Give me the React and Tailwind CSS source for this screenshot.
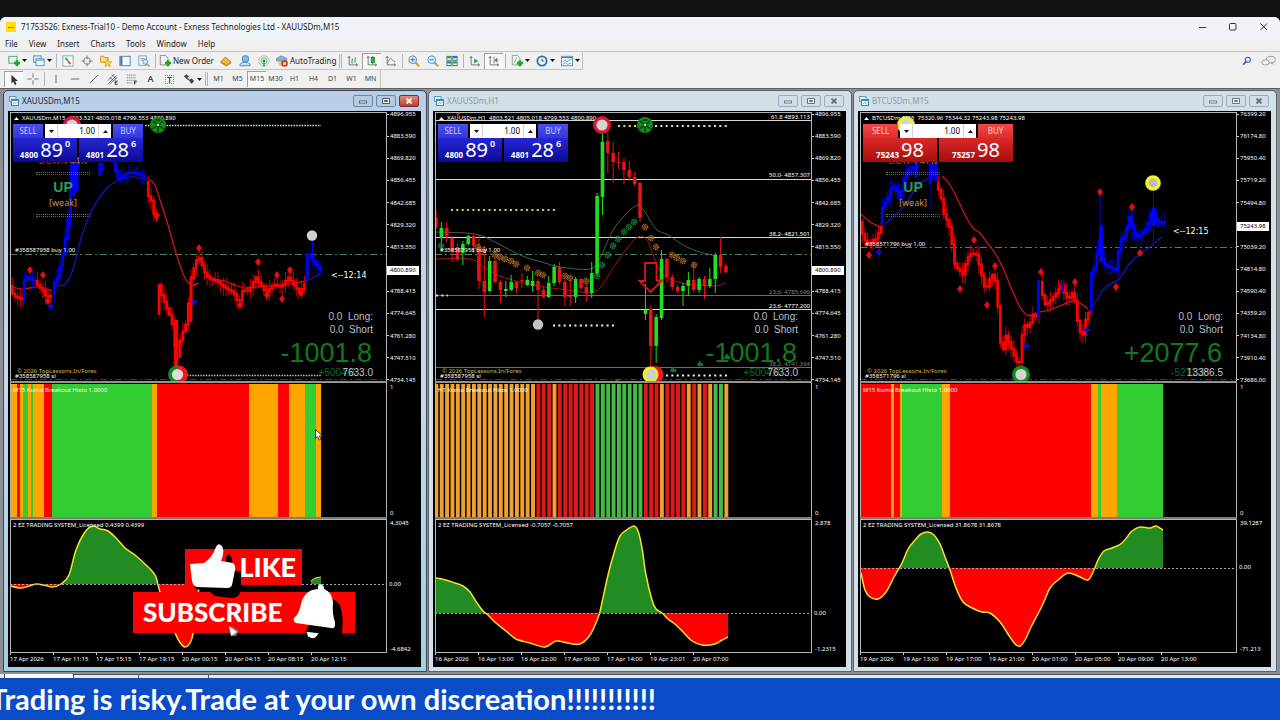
import React from "react";

/* ---------- chart helpers ---------- */

const at = (pts, x) => {
  for (let i = 1; i < pts.length; i++) {
    const [x0, y0] = pts[i - 1];
    const [x1, y1] = pts[i];
    if (x <= x1) return x1 === x0 ? y1 : y0 + ((y1 - y0) * (x - x0)) / (x1 - x0);
  }
  return pts[pts.length - 1][1];
};

const smooth = (pts) => {
  let d = `M${pts[0][0]} ${pts[0][1]}`;
  for (let i = 0; i < pts.length - 1; i++) {
    const a = pts[i - 1] || pts[i];
    const b = pts[i];
    const c = pts[i + 1];
    const e = pts[i + 2] || c;
    d += `C${b[0] + (c[0] - a[0]) / 6} ${b[1] + (c[1] - a[1]) / 6} ${c[0] - (e[0] - b[0]) / 6} ${c[1] - (e[1] - b[1]) / 6} ${c[0]} ${c[1]}`;
  }
  return d;
};

function Ribbon({ pts, color }) {
  const step = 2.7;
  let body = "";
  let wick = "";
  let i = 0;
  for (let x = pts[0][0]; x < pts[pts.length - 1][0]; x += step, i++) {
    const a = at(pts, x);
    const b = at(pts, x + step);
    const lo = Math.min(a, b) - 1;
    const hi = Math.max(a, b) + 1;
    const k = Math.abs(Math.sin(i * 5.3 + pts[0][0]));
    const m = Math.abs(Math.cos(i * 3.7 + pts[0][0]));
    body += `M${x + 1.3} ${lo}V${hi}`;
    wick += `M${x + 1.3} ${lo - 1 - k * 7}V${hi + 1 + m * 7}`;
  }
  return (
    <g stroke={color}>
      <path d={body} strokeWidth="2.8" />
      <path d={wick} strokeWidth="0.8" />
    </g>
  );
}

const Curve = ({ pts, color, w = 1.2 }) => <path d={smooth(pts)} fill="none" stroke={color} strokeWidth={w} />;

const Diamonds = ({ pts }) => (
  <g fill="#e80c0c">
    {pts.map(([x, y]) => (
      <path key={x + "-" + y} d={`M${x} ${y - 4}L${x + 3} ${y}L${x} ${y + 4}L${x - 3} ${y}Z`} />
    ))}
  </g>
);

const Pluses = ({ pts }) => (
  <g stroke="#0a0ae0" strokeWidth="2.2">
    {pts.map(([x, y]) => (
      <path key={x} d={`M${x - 3} ${y}H${x + 3}M${x} ${y - 3}V${y + 3}`} />
    ))}
  </g>
);

const Dots = ({ x1, x2, y, color, gap = 5.36, w = 2 }) => (
  <path d={`M${x1} ${y}H${x2}`} stroke={color} strokeWidth={w} strokeDasharray={`${w} ${gap - w}`} />
);

const Orb = ({ x, y, ring, core = "#d4d4d4", r = 9 }) => (
  <g>
    <circle cx={x} cy={y} r={r} fill={ring} />
    <circle cx={x} cy={y} r={r - 3.4} fill={core} />
  </g>
);

const Emblem = ({ x, y }) => (
  <g>
    <circle cx={x} cy={y} r="8" fill="#128a1c" />
    <path
      d={`M${x - 6} ${y + 4}L${x} ${y}L${x + 6} ${y + 4}M${x - 5} ${y - 4}L${x} ${y}L${x + 5} ${y - 4}M${x} ${y}V${y + 7}M${x - 2.4} ${y - 5}H${x + 2.4}`}
      stroke="#03400a"
      strokeWidth="1.4"
      fill="none"
    />
    <circle cx={x} cy={y} r="1.3" fill="#9be89b" />
  </g>
);

const Gears = ({ pts, color }) => (
  <g fill={color} stroke={color}>
    {pts.map(([x, y]) => (
      <g key={x + "-" + y}>
        <circle cx={x} cy={y} r="2.6" strokeWidth="1.6" strokeDasharray="1.2 0.84" fill="none" />
        <circle cx={x} cy={y} r="2" fillOpacity="0.6" stroke="none" />
      </g>
    ))}
  </g>
);

const OrderLines = ({ x, buy }) => (
  <g>
    <path d={`M${x} ${buy}H${x + 377}`} stroke="#4c8456" strokeWidth="1" strokeDasharray="7 3 2 3" />
    <path d={`M${x} 379.5H${x + 377}`} stroke="#a01030" strokeWidth="1" strokeDasharray="7 3 2 3" />
  </g>
);

/* ---------- price charts ---------- */

function GoldM15() {
  return (
    <>
      <OrderLines x={10} buy={254.5} />
      <Dots x1={145} x2={321} y={125.5} color="#b7e6c4" gap={2.7} w={1.6} />
      <Dots x1={187} x2={321} y={375.5} color="#d8cf86" gap={2.7} w={1.4} />
      <Curve color="#d01818" pts={[[11, 286], [22, 289], [36, 287], [44, 288], [52, 291]]} />
      <Curve color="#1414c8" pts={[[56, 286], [65, 284], [72, 272], [77, 255], [82, 235], [92, 210], [105, 190], [115, 182], [125, 178], [135, 177], [147, 180]]} />
      <Curve color="#e01414" pts={[[150, 180], [155, 185], [160, 200], [168, 225], [175, 250], [180, 265], [185, 278], [191, 285], [199, 283]]} />
      <Curve color="#e01414" pts={[[207, 274], [215, 279], [225, 281], [235, 285], [244, 288], [255, 287], [270, 286], [290, 284], [305, 281]]} />
      <Curve color="#1414c8" pts={[[306, 281], [313, 278], [320, 274]]} />
      <Ribbon color="#ff0000" pts={[[11, 286], [13, 293], [17, 297], [22, 299]]} />
      <Ribbon color="#0000ff" pts={[[23, 298], [25, 281], [28, 277], [35, 281]]} />
      <Ribbon color="#ff0000" pts={[[36, 281], [40, 287], [44, 290], [48, 298], [52, 296]]} />
      <Ribbon color="#0000ff" pts={[[53, 294], [56, 281], [59, 277], [62, 262], [65, 250], [67, 235], [70, 212], [72, 188], [74, 170], [80, 163]]} />
      <path d="M71 163V188M74 163V196M77 163V192M100 163V176M102 163V172" stroke="#0000ff" strokeWidth="3" />
      <Ribbon color="#0000ff" pts={[[114, 162], [117, 172], [120, 180], [126, 174], [132, 172], [140, 174], [146, 177]]} />
      <Ribbon color="#ff0000" pts={[[147, 182], [148, 195], [152, 198], [154, 212], [157, 216]]} />
      <path d="M153 214H160L156.500 222Z" fill="#ff0000" />
      <path d="M159 284V315" stroke="#ff0000" strokeWidth="2.8" />
      <Ribbon color="#ff0000" pts={[[160, 285], [163, 296], [168, 308], [173, 320], [176, 346], [180, 346], [184, 332], [188, 322], [190, 300], [192, 280], [196, 265], [199, 257], [201, 258], [205, 271], [210, 279], [218, 281], [225, 287], [235, 293], [240, 304], [244, 290], [250, 291], [257, 277], [262, 285], [267, 293], [275, 284], [282, 287], [290, 277], [296, 287], [302, 292], [305, 284]]} />
      <path d="M176 320V372" stroke="#ff0000" strokeWidth="4.500" />
      <path d="M180 340V358M191 276V322" stroke="#ff0000" strokeWidth="2.6" />
      <Ribbon color="#0000ff" pts={[[306, 276], [308, 255], [312, 257], [316, 264], [321, 270]]} />
      <path d="M306.500 254V282M312.500 240V262" stroke="#0000ff" strokeWidth="1.500" />
      <Diamonds pts={[[30, 270], [43, 275], [48, 301], [199, 248], [258, 262], [277, 275], [290, 270], [240, 305], [267, 295], [282, 299], [301, 293]]} />
      <Pluses pts={[[51, 306], [194, 302]]} />
      <Emblem x={158} y={125} />
      <Orb x={72} y={125} ring="#dc143c" />
      <circle cx="312" cy="235.500" r="5.200" fill="#cfcfcf" />
      <circle cx="179" cy="374.500" r="9" fill="#f01818" />
      <path d="M177 365.500A9 9 0 0 0 177 383.500Z" fill="#0f8a1c" />
      <circle cx="177.500" cy="374.500" r="5.600" fill="#dcdcdc" />
    </>
  );
}

// [bullish, body top, body bottom, wick top, wick bottom]
const H1 = [
  [0, 218, 227, 210, 229], [1, 228, 238, 222, 250], [0, 228, 236, 222, 242], [0, 238, 251, 236, 262], [0, 247, 259, 244, 261],
  [1, 244, 253, 241, 265], [1, 236, 244, 235, 246], [0, 236, 246, 234, 253], [0, 247, 281, 235, 289], [0, 281, 292, 246, 317],
  [1, 261, 291, 256, 292], [0, 261, 282, 258, 283], [0, 282, 290, 280, 303], [1, 289, 291, 281, 297], [1, 282, 290, 275, 291],
  [0, 282, 288, 281, 293], [0, 280, 281, 273, 288], [1, 280, 285, 276, 286], [1, 281, 286, 271, 292], [0, 281, 290, 279, 321],
  [0, 290, 297, 286, 298], [1, 283, 297, 276, 298], [1, 267, 283, 264, 286], [0, 267, 282, 262, 284], [0, 282, 297, 280, 306],
  [0, 296, 297, 280, 306], [1, 279, 297, 277, 303], [0, 279, 288, 278, 290], [0, 287, 293, 284, 302], [1, 273, 293, 262, 298],
  [1, 196, 274, 193, 276], [1, 142, 197, 126, 215], [0, 141, 153, 134, 173], [0, 153, 162, 142, 183], [0, 162, 163, 152, 169],
  [0, 162, 170, 158, 184], [0, 170, 177, 161, 181], [0, 177, 184, 172, 186], [0, 183, 218, 182, 222], [1, 310, 314, 284, 320],
  [0, 309, 346, 306, 367], [1, 317, 346, 314, 363], [1, 259, 318, 250, 320], [0, 259, 277, 258, 283], [0, 277, 287, 274, 290],
  [0, 287, 291, 285, 293], [1, 286, 291, 283, 306], [1, 280, 286, 272, 296], [0, 280, 290, 262, 292], [1, 279, 290, 277, 293],
  [0, 279, 286, 276, 299], [1, 279, 286, 268, 288], [1, 255, 279, 253, 293], [0, 255, 267, 237, 273], [0, 266, 272, 264, 274],
];

function GoldH1() {
  return (
    <>
      <path d="M435 120.500H812M435 179.500H812M435 237.500H812M435 309.500H812" stroke="#d8d8d8" />
      <path d="M435 295.500H812M435 367.500H812" stroke="#6c6c6c" />
      <OrderLines x={435} buy={254.5} />
      <Dots x1={451} x2={556} y={210} color="#d6d650" />
      <Dots x1={618} x2={641} y={126} color="#e2e23c" />
      <Dots x1={655} x2={728} y={126} color="#e4e4c4" />
      <Dots x1={553} x2={615} y={325.5} color="#f2f2f2" />
      <Dots x1={666} x2={728} y={375.5} color="#f2f2f2" />
      <Dots x1={436} x2={448} y={295.5} color="#e0e0e0" />
      <Curve w={0.9} color="#4d6b57" pts={[[436, 232], [475, 234], [495, 242], [520, 255], [545, 263], [560, 267], [590, 269], [600, 258], [612, 232], [625, 215], [638, 205], [645, 212], [656, 229], [668, 235], [685, 246], [700, 252], [716, 256]]} />
      <Curve w={1} color="#a81428" pts={[[436, 259], [470, 259], [485, 268], [500, 276], [520, 282], [545, 287], [575, 291], [590, 293], [600, 288], [615, 265], [628, 247], [638, 237], [647, 240], [656, 262], [663, 275], [678, 282], [697, 285], [715, 286], [726, 283]]} />
      {H1.map(([up, a, b, c, d], i) => (
        <g key={i} stroke={up ? "#1ee01e" : "#e81414"}>
          <path d={`M${436 + i * 5.37} ${c}V${d}`} strokeWidth="1" />
          <path d={`M${436 + i * 5.37} ${a}V${b}`} strokeWidth="3.6" />
        </g>
      ))}
      <Gears color="#b06a22" pts={[[478, 247], [484, 250], [495, 255], [500, 257], [505, 259], [511, 261], [516, 264], [527, 268], [538, 273], [543, 275], [565, 276], [570, 278], [586, 281], [645, 227], [651, 238], [656, 247], [672, 255], [677, 258], [683, 261], [694, 265]]} />
      <Gears color="#1d8a35" pts={[[441, 246], [597, 276], [602, 265], [608, 255], [613, 246], [618, 239], [624, 232], [629, 227], [634, 222]]} />
      <path d="M645 263H656.500V280.500H662L650.500 292L639.500 281H645Z" fill="none" stroke="#e01414" strokeWidth="1.800" />
      <path d="M670 370L673 366L674 369H676V372H671ZM697 365L700 360L701 363H703V366H698ZM724 358L727 353L728 356H730V359H725ZM614 382L617 379L620 382Z" fill="#0c7a22" />
      <path d="M456 113L460 113L458 117Z" fill="#e01414" />
      <Orb x={602} y={125} ring="#dc1430" />
      <Emblem x={645} y={125} />
      <circle cx="538" cy="324.500" r="5.200" fill="#c4c4c4" />
      <circle cx="655" cy="374.500" r="8.500" fill="#f01818" />
      <circle cx="650.500" cy="374.500" r="8" fill="#eef022" />
      <circle cx="651.500" cy="374.500" r="5.200" fill="#cfcfcf" />
    </>
  );
}

function BtcM15() {
  return (
    <>
      <OrderLines x={860} buy={247.5} />
      <Curve color="#e01414" pts={[[861, 214], [870, 222], [880, 227]]} />
      <Curve color="#1414d0" pts={[[883, 226], [895, 215], [905, 205], [918, 185], [930, 177], [938, 174]]} />
      <Curve color="#e01414" pts={[[942, 176], [948, 182], [956, 196], [965, 215], [973, 228], [980, 233], [988, 244], [995, 253], [1003, 268], [1012, 290], [1020, 307], [1027, 315], [1036, 315]]} />
      <Curve color="#e01414" pts={[[1040, 312], [1050, 310], [1062, 305], [1072, 301], [1080, 303], [1088, 309]]} />
      <Curve color="#1414d0" pts={[[1091, 308], [1097, 300], [1103, 290], [1112, 283], [1120, 278], [1130, 263], [1140, 254], [1150, 247], [1158, 240], [1162, 237]]} />
      <Ribbon color="#ff0000" pts={[[861, 222], [863, 232], [866, 240], [870, 246], [874, 240], [879, 238], [881, 227]]} />
      <Ribbon color="#0000ff" pts={[[881, 222], [883, 208], [888, 200], [893, 185], [896, 188], [900, 198], [903, 190], [906, 174], [912, 168], [918, 165]]} />
      <path d="M916 163V178M930 163V184M933 163V180M936 163V182" stroke="#0000ff" strokeWidth="2.600" />
      <path d="M931 180V209" stroke="#0000ff" strokeWidth="0.900" />
      <Ribbon color="#ff0000" pts={[[937, 183], [942, 195], [944, 212], [949, 222], [952, 232], [955, 262], [958, 268], [962, 272], [965, 276], [967, 262], [970, 255], [974, 253], [978, 255], [981, 268], [985, 284], [987, 292], [990, 280], [995, 273], [998, 290], [1000, 320], [1002, 345], [1005, 350], [1007, 335], [1010, 342], [1015, 355], [1019, 364], [1021, 362], [1022, 340], [1026, 325], [1030, 328], [1034, 314], [1037, 316]]} />
      <path d="M1038.500 280V318" stroke="#0000ff" strokeWidth="3" />
      <Ribbon color="#ff0000" pts={[[1041, 282], [1043, 290], [1045, 305], [1050, 302], [1054, 298], [1058, 292], [1063, 285], [1066, 295], [1070, 299], [1074, 292], [1076, 300], [1078, 315], [1080, 330], [1084, 336], [1086, 322], [1090, 312]]} />
      <path d="M1062.500 283V292" stroke="#0000ff" strokeWidth="3" />
      <Ribbon color="#0000ff" pts={[[1090, 310], [1092, 275], [1094, 268], [1097, 267], [1100, 230], [1102, 255], [1107, 266], [1114, 268], [1117, 270], [1119, 255], [1122, 240], [1126, 235], [1131, 215], [1134, 230], [1139, 238], [1144, 232], [1148, 228], [1153, 210], [1156, 218], [1160, 224], [1163, 222]]} />
      <path d="M1100 194V262M1153.500 188V246M1132 210V240" stroke="#0000ff" strokeWidth="1" />
      <path d="M1101 226V262M1154 208V226" stroke="#0000ff" strokeWidth="4" />
      <Diamonds pts={[[869, 255], [960, 289], [974, 240], [987, 305], [995, 266], [1041, 272], [1075, 282], [1100, 192], [1132, 207], [1140, 253], [1116, 287]]} />
      <Pluses pts={[[879, 252], [1027, 346], [1087, 330]]} />
      <Orb x={906} y={125} ring="#e8f03c" />
      <Orb x={1153} y={183} ring="#f4f42c" core="#bdbdbd" r={7.8} />
      <Orb x={1021} y={374.5} ring="#128a1c" />
    </>
  );
}

/* ---------- histogram and oscillator ---------- */

const HUES = { o: "#ffa500", r: "#ff0000", g: "#32cd32" };

const Bands = ({ data }) =>
  data.map(([c, a, b]) => <rect key={a} x={a} y="384" width={b - a + 0.1} height="133" fill={HUES[c]} />);

const STRIPES = "ooooooooooooooooooorrrorrrrrrrgggggggggrrrorrrrororoggo";
const STRIPE_HUES = { o: "#f0a030", r: "#e01818", g: "#44bb44" };

const Stripes = () =>
  STRIPES.split("").map((c, i) => (
    <rect key={i} x={434.4 + i * 5.37} y="384" width="3.9" height="133" fill={STRIPE_HUES[c]} />
  ));

function Oscillator({ id, pts, zero, x, extra }) {
  const d = smooth(pts);
  const end = pts[pts.length - 1][0];
  const area = `${d}L${end} ${zero}L${pts[0][0]} ${zero}Z`;
  return (
    <>
      <clipPath id={id + "-up"}><rect x={x} y="519" width="377" height={zero - 519} /></clipPath>
      <clipPath id={id + "-down"}><rect x={x} y={zero} width="377" height={653 - zero} /></clipPath>
      <path d={area} fill="#228b22" clipPath={`url(#${id}-up)`} />
      <path d={area} fill="#ff0000" clipPath={`url(#${id}-down)`} />
      <path d={d} fill="none" stroke="#f4e428" strokeWidth="1.500" />
      {extra}
      <path d={`M${x} ${zero + 0.5}H${x + 377}`} stroke="#a8a8a8" strokeDasharray="2 2" />
    </>
  );
}

const OSC1 = [[10, 586], [22, 588], [37, 584], [52, 587], [61, 584], [69, 575], [76, 550], [85, 532], [93, 526], [100, 529], [108, 531], [117, 539], [125, 548], [135, 555], [145, 564], [152, 571], [156, 577], [158, 585], [160, 592], [166, 612], [173, 628], [179, 641], [185, 647], [191, 641], [194, 628], [197, 605], [199, 588]];
const OSC2 = [[436, 578], [446, 580], [455, 583], [463, 586], [470, 592], [477, 603], [483, 611], [488, 615], [496, 623], [506, 631], [516, 639], [530, 643], [545, 647], [556, 641], [568, 643], [580, 644], [590, 635], [598, 618], [601, 607], [608, 575], [614, 553], [620, 536], [628, 529], [634, 526], [638, 531], [642, 548], [646, 575], [652, 600], [656, 609], [662, 613], [668, 619], [676, 625], [684, 633], [692, 641], [702, 645], [715, 644], [722, 640], [728, 637]];
const OSC3 = [[861, 573], [865, 590], [870, 597], [878, 599], [886, 592], [894, 577], [902, 563], [908, 549], [915, 540], [921, 534], [928, 532], [934, 535], [940, 544], [945, 557], [950, 570], [956, 588], [963, 602], [972, 608], [982, 612], [990, 613], [1000, 622], [1008, 634], [1015, 644], [1020, 646], [1025, 640], [1032, 625], [1042, 606], [1050, 588], [1058, 580], [1068, 573], [1078, 576], [1088, 580], [1094, 570], [1098, 560], [1104, 551], [1112, 548], [1122, 543], [1132, 531], [1140, 527], [1150, 528], [1156, 526], [1163, 530]];

/* ---------- one-click trading ---------- */

const VolumeArrow = ({ up }) => (
  <svg viewBox="0 0 5 3" className="mx-auto h-[3px] w-[5px]">
    <path d={up ? "M0 3H5L2.500 0Z" : "M0 0H5L2.500 3Z"} fill="#111" />
  </svg>
);

function TradePanel({ tone, sell, buy, label }) {
  const red = tone === "red";
  const tab = red
    ? "flex-1 bg-linear-to-b from-[#f04848] to-[#dc2c2c] text-[#ffd0d0]"
    : "flex-1 bg-linear-to-b from-[#4c50ee] to-[#3434d8] text-[#c8ccff]";
  const tile = red
    ? "flex h-[24px] flex-1 items-end justify-center gap-[2px] bg-linear-to-b from-[#dc2828] to-[#a80c0c] pb-px text-white"
    : "flex h-[24px] flex-1 items-end justify-center gap-[2px] bg-linear-to-b from-[#2626d4] to-[#0a0a96] pb-px text-white";
  const price = ([small, big, sup]) => (
    <>
      <span className="text-[8px] leading-[12px] font-bold">{small}</span>
      <span className="text-[20px] leading-[22px]">{big}</span>
      {sup && <span className="self-start text-[9px] leading-[11px] font-semibold">{sup}</span>}
    </>
  );
  return (
    <div className={red ? "absolute top-[11px] left-[2px] w-[150px]" : "absolute top-[11px] left-[2px] w-[130px]"}>
      <div className="flex h-[14px] text-[8px] leading-[14px]">
        <button className={tab}>SELL</button>
        <div className={red ? "mx-[2px] flex w-[76px] bg-white text-black" : "mx-[2px] flex w-[66px] bg-white text-black"}>
          <button aria-label="Decrease volume" className="w-[13px] border-r border-gray-300"><VolumeArrow /></button>
          <input aria-label={label} defaultValue="1.00" className="w-0 min-w-0 flex-1 pr-[3px] text-right outline-none" />
          <button aria-label="Increase volume" className="w-[13px] border-l border-gray-300"><VolumeArrow up /></button>
        </div>
        <button className={tab}>BUY</button>
      </div>
      <div className="flex gap-[2px]">
        <button className={tile}>{price(sell)}</button>
        <button className={tile}>{price(buy)}</button>
      </div>
    </div>
  );
}

/* ---------- subwindow ---------- */

const MiniChart = () => (
  <svg viewBox="0 0 10 10" className="h-[10px] w-[10px]">
    <rect x="0.500" y="0.500" width="6.500" height="5" fill="#e8f4fc" stroke="#5a9ac8" />
    <rect x="2.500" y="3.500" width="7" height="6" fill="#f4fafe" stroke="#3c86bc" />
    <path d="M2.500 4.500H9.500" stroke="#3c86bc" />
    <path d="M4 8L5.500 6.500L7 7.500L8.500 6" stroke="#60a060" fill="none" strokeWidth="0.700" />
  </svg>
);

function FrameButton({ label, active, kind }) {
  const cls =
    active && kind === "close"
      ? "flex h-[12px] w-[20px] items-center justify-center rounded-[2px] border border-[#7a2c28] bg-linear-to-b from-[#dc8a7c] to-[#c03c28] text-white"
      : active
        ? "flex h-[12px] w-[20px] items-center justify-center rounded-[2px] border border-[#6c86a6] bg-[#b4cae2] text-[#48586c]"
        : "flex h-[12px] w-[20px] items-center justify-center rounded-[2px] border border-[#9aabba] bg-[#cfdeea] text-[#66707c]";
  return (
    <button aria-label={label} className={cls}>
      <svg viewBox="0 0 8 6" className="h-[6px] w-[8px]" fill="none" stroke="currentColor">
        {kind === "min" && <rect x="0.500" y="3" width="7" height="2" fill="#fff" strokeWidth="0.900" />}
        {kind === "max" && <path d="M0.500 0.500H7.500V5.500H0.500ZM2.500 2.500H5.500V3.500H2.500Z" fill="#fff" />}
        {kind === "close" && <path d="M1.500 0.500L6.500 5.500M6.500 0.500L1.500 5.500" strokeWidth="1.800" />}
      </svg>
    </button>
  );
}

const Note = ({ className, children }) => (
  <span className={"absolute whitespace-pre " + className}>{children}</span>
);

function SubWindow({ w }) {
  const active = w.active;
  return (
    <section
      className={
        active
          ? "min-w-0 flex-1 rounded-t-[5px] border border-[#3c4650] bg-linear-to-b from-[#b9cfe8] via-[#c4d8ea] to-[#a4cfe2] pr-[5px] pb-[4px] pl-[4px]"
          : "min-w-0 flex-1 rounded-t-[5px] border border-[#5a646e] bg-[#d2e0ea] pr-[5px] pb-[4px] pl-[4px]"
      }
    >
      <header className="flex h-[20px] items-center gap-[3px] pr-[2px] pl-px">
        <MiniChart />
        <h2 className={active ? "flex-1 text-[8px] text-[#1c2834]" : "flex-1 text-[8px] text-[#8c98a4]"}>{w.title}</h2>
        <div className="flex gap-[3px]">
          <FrameButton label="Minimize" kind="min" active={active} />
          <FrameButton label="Maximize" kind="max" active={active} />
          <FrameButton label="Close" kind="close" active={active} />
        </div>
      </header>

      <div className="flex bg-black pl-[2px] text-[6px] leading-[8px] text-white">
        <div className="min-w-0 flex-1 pt-px">
          <div className="relative overflow-hidden border-x border-t border-[#b4b4b4]">
            <div className="absolute top-px left-[3px] flex items-center gap-[3px] whitespace-pre">
              <svg viewBox="0 0 5 3" className="h-[3px] w-[5px]"><path d="M0 3H5L2.500 0Z" fill="#fff" /></svg>
              {w.quote}
            </div>
            <svg viewBox={`${w.x + 1} 113 375 268`} preserveAspectRatio="none" className="relative block h-[268px] w-full">
              {w.chart}
            </svg>
            {w.notes}
            <Note className="top-[254px] left-[6px] text-[#d8bc44]">© 2026 TopLessons.In/Forex</Note>
            <Note className="top-[259px] left-[4px]">#{w.order} sl</Note>
            <Note className={w.buyAt}>#{w.order} buy 1.00</Note>
            <div className={w.statsAt}>
              <p>0.0{"  "}Long:</p>
              <p>0.0{"  "}Short</p>
            </div>
            <Note className="top-[226px] right-[14px] font-['Liberation_Sans',sans-serif] text-[27px] leading-[28px] text-[#127a18]">{w.profit}</Note>
            <Note className={w.ghostAt}>{w.ghost}</Note>
            <Note className="top-[254px] right-[13px] font-['Liberation_Sans',sans-serif] text-[10px] leading-[12px] text-[#c4c8d0]">{w.pips}</Note>
            <TradePanel {...w.trade} label={w.title + " volume"} />
          </div>
          <div className="h-[2px] bg-[#949494]" />
          <div className="relative border-x border-[#b4b4b4]">
            <svg viewBox={`${w.x + 1} 383 375 134`} preserveAspectRatio="none" className="block h-[134px] w-full">
              {w.histo}
            </svg>
            <Note className="top-[3px] left-[2px] text-white">{w.histoLabel}</Note>
            {w.pointer}
          </div>
          <div className="h-[2px] bg-[#7c7c7c]" />
          <div className="relative border border-[#b4b4b4]">
            <svg viewBox={`${w.x + 1} 520 375 132`} preserveAspectRatio="none" className="block h-[132px] w-full">
              {w.osc}
            </svg>
            <Note className="top-px left-[2px]">{w.oscLabel}</Note>
            {w.overlay}
          </div>
          <ol className="flex h-[14px]">
            {w.times.map((t) => (
              <li key={t} className="w-[43px] shrink-0 whitespace-nowrap">
                <span className="block h-[2px] w-px bg-[#d0d0d0]" />
                {t}
              </li>
            ))}
          </ol>
        </div>
        <div className="w-[34px] shrink-0">
          <ol className="flex h-[272px] flex-col justify-between">
            {w.prices.map((p, i) => (
              <li key={p} className="flex h-[6px] items-center">
                {i === w.mark ? (
                  <strong className={w.markClass}>{p}</strong>
                ) : (
                  <>
                    <span className="mr-px h-px w-[2px] bg-[#d0d0d0]" />
                    {p}
                  </>
                )}
              </li>
            ))}
          </ol>
          <div className="flex h-[134px] flex-col justify-between pl-[3px]">
            <span>1</span>
            <span>0</span>
          </div>
          <div className="relative mt-[2px] flex h-[134px] flex-col justify-between pl-[3px]">
            <span>{w.oscMax}</span>
            <span className={w.zeroAt}>0.00</span>
            <span>{w.oscMin}</span>
          </div>
        </div>
      </div>
    </section>
  );
}

const Trend = ({ down }) => (
  <div className="absolute top-[43px] left-[25px] flex w-[54px] flex-col items-center text-center whitespace-nowrap">
    <p className="text-[9px] leading-[10px] text-[#c03030]">
      DOWN <span className="text-[#c87820]">{down}</span>
    </p>
    <span className="mt-[6px] h-[3px] w-full border-y border-dotted border-[#3a8050]" />
    <p className="mt-[4px] font-['Liberation_Sans_Narrow','Liberation_Sans',sans-serif] text-[14px] leading-[16px] font-bold text-[#2e9a5a]">UP</p>
    <p className="text-[9px] leading-[15px] text-[#d0944c]">[weak]</p>
    <span className="mt-[4px] h-[3px] w-full border-y border-dotted border-[#3a8050]" />
  </div>
);

const Pointer = () => (
  <svg viewBox="0 0 8 12" className="absolute top-[46px] left-[304px] h-[12px] w-[8px]">
    <path d="M0.500 0.500V9.500L2.700 7.500L4.200 11L5.800 10.300L4.300 7H7.300Z" fill="#fff" stroke="#222" strokeWidth="0.800" />
  </svg>
);

const CallToAction = () => (
  <div className="absolute top-[29px] left-[122px] w-[222px] font-['Lato',sans-serif] font-black text-white">
    <div className="ml-[52px] flex h-[36px] w-[117px] items-center justify-end bg-[#ff0000] pr-[6px] text-[27px] leading-[36px]">LIKE</div>
    <div className="mt-[7px] flex h-[41px] items-center bg-[#ff0000] pl-[10px] text-[26px] leading-[41px]">SUBSCRIBE</div>
    <svg viewBox="0 0 222 100" className="absolute top-[-6px] left-0 h-[100px] w-[222px]">
      <path d="M62 41L92 40L93 14L96 11Q100 14 99 21L98 28H108V42L107 49Q106 55 98 55L82 53L76 48L62 46Z" fill="#000" />
      <path d="M57 21L71 20Q79 15 83 4Q85 -1 89 3Q92 9 88 18L100 20Q103 22 102 27L99 42Q98 45 94 45L64 44Q60 43 59 38Z" fill="#fff" />
      <path d="M191 56Q201 54 207 62Q211 74 209 90L203 92L187 93L172 89Z" fill="#000" />
      <path d="M185 46Q184 42 188 41Q191 42 191 46Q199 49 200 59Q199 71 202 79V83Q201 86 198 85L163 80Q160 79 161 75Q166 71 168 61Q171 47 185 46Z" fill="#fff" />
      <path d="M175 90L184 91Q181 96 176 93Z" fill="#fff" stroke="#fff" strokeWidth="2" />
      <path d="M98 83L106 88L103 93L99 93Z" fill="#777" />
      <path d="M96 83L104 89L98 93Z" fill="#fff" />
    </svg>
  </div>
);

const GOLD_PRICES = ["4896.955", "4883.590", "4869.820", "4856.455", "4842.685", "4829.320", "4815.550", "4800.890", "4788.415", "4774.645", "4761.280", "4747.510", "4734.145"];

const STATS = "absolute top-[197px] right-[13px] text-right font-['Liberation_Sans',sans-serif] text-[10px] leading-[13px] whitespace-pre text-[#b4c0d0]";
const GHOST = "top-[254px] right-[31px] font-['Liberation_Sans',sans-serif] text-[10px] leading-[12px] text-[#0e6c24]";
const TIMER_LOW = "top-[157px] left-[320px] font-['DejaVu_Sans',sans-serif] text-[8px] leading-[12px]";
const TIMER_HIGH = "top-[113px] left-[312px] font-['DejaVu_Sans',sans-serif] text-[8px] leading-[12px]";
const MARK = "mt-[3px] h-[9px] w-[32px] shrink-0 bg-white pl-[3px] leading-[9px] font-normal text-black";

const WINDOWS = [
  {
    title: "XAUUSDm,M15", active: true, x: 10, order: "358587958",
    quote: "XAUUSDm,M15  4803.521 4805.018 4799.553 4800.890",
    chart: <GoldM15 />,
    notes: (
      <>
        <Trend down="44%" />
        <Note className={TIMER_LOW}>&lt;--12:14</Note>
      </>
    ),
    buyAt: "top-[133px] left-[4px]", statsAt: STATS, ghostAt: GHOST,
    profit: "-1001.8", pips: "7633.0", ghost: "+5004.8",
    trade: { tone: "blue", sell: ["4800", "89", "0"], buy: ["4801", "28", "6"] },
    histoLabel: "M15 Kumo Breakout Histo 1.0000", oscLabel: "2 EZ TRADING SYSTEM_Licensed 0.4399 0.4399",
    histo: <Bands data={[["o", 11, 17], ["r", 17, 20], ["o", 20, 23], ["g", 23, 28], ["o", 28, 31], ["g", 31, 33], ["o", 33, 44], ["r", 44, 52], ["g", 52, 152], ["o", 152, 157], ["r", 157, 249], ["o", 249, 278], ["r", 278, 289], ["o", 289, 305], ["g", 305, 316], ["o", 316, 321]]} />,
    osc: (
      <Oscillator id="osc-a" x={10} zero={584} pts={OSC1} extra={
        <>
          <path d="M311 584V581L315 578L321 577V584Z" fill="#228b22" />
          <path d="M311 581L315 578L321 577" fill="none" stroke="#f4e428" />
        </>
      } />
    ),
    pointer: <Pointer />, overlay: <CallToAction />,
    times: ["17 Apr 2026", "17 Apr 11:15", "17 Apr 15:15", "17 Apr 19:15", "20 Apr 00:15", "20 Apr 04:15", "20 Apr 08:15", "20 Apr 12:15"],
    prices: GOLD_PRICES, mark: 7, markClass: MARK, oscMax: "4.3045", oscMin: "-4.6842", zeroAt: "absolute top-[61px] left-[2px]",
  },
  {
    title: "XAUUSDm,H1", x: 435, order: "358587958",
    quote: "XAUUSDm,H1  4803.521 4805.018 4799.553 4800.890",
    chart: <GoldH1 />,
    notes: (
      <>
        <Note className="top-0 right-px">61.8 4893.113</Note>
        <Note className="top-[58px] right-px">50.0- 4857.307</Note>
        <Note className="top-[117px] right-px">38.2- 4821.501</Note>
        <Note className="top-[175px] right-px text-[#808080]">23.6- 4785.696</Note>
        <Note className="top-[189px] right-px">23.6- 4777.200</Note>
        <Note className="top-[247px] right-px text-[#808080]">38.2- 4741.394</Note>
      </>
    ),
    buyAt: "top-[133px] left-[4px]", statsAt: STATS, ghostAt: GHOST,
    profit: "-1001.8", pips: "7633.0", ghost: "+5004.8",
    trade: { tone: "blue", sell: ["4800", "89", "0"], buy: ["4801", "28", "6"] },
    histoLabel: "H1 Kumo Breakout Histo 1.0000", oscLabel: "2 EZ TRADING SYSTEM_Licensed -0.7057 -0.7057",
    histo: <Stripes />, osc: <Oscillator id="osc-b" x={435} zero={613} pts={OSC2} />,
    times: ["16 Apr 2026", "16 Apr 13:00", "16 Apr 22:00", "17 Apr 06:00", "17 Apr 14:00", "19 Apr 23:01", "20 Apr 07:00"],
    prices: GOLD_PRICES, mark: 7, markClass: MARK, oscMax: "2.878", oscMin: "-1.2315", zeroAt: "absolute top-[90px] left-[2px]",
  },
  {
    title: "BTCUSDm,M15", x: 860, order: "358571796",
    quote: "BTCUSDm,M15  75320.96 75344.32 75243.98 75243.98",
    chart: <BtcM15 />,
    notes: (
      <>
        <Trend down="41%" />
        <Note className={TIMER_HIGH}>&lt;--12:15</Note>
      </>
    ),
    buyAt: "top-[127px] left-[4px]", statsAt: STATS, ghostAt: GHOST,
    profit: "+2077.6", pips: "13386.5", ghost: "-5271.3",
    trade: { tone: "red", sell: ["75243", "98"], buy: ["75257", "98"] },
    histoLabel: "M15 Kumo Breakout Histo 1.0000", oscLabel: "2 EZ TRADING SYSTEM_Licensed 31.8678 31.8678",
    histo: <Bands data={[["r", 860, 891], ["o", 891, 894], ["r", 894, 900], ["o", 900, 902], ["g", 902, 942], ["o", 942, 950], ["r", 950, 1091], ["o", 1091, 1098], ["g", 1098, 1101], ["o", 1101, 1117], ["g", 1117, 1163]]} />,
    osc: <Oscillator id="osc-c" x={860} zero={568} pts={OSC3} />,
    times: ["19 Apr 2026", "19 Apr 13:00", "19 Apr 17:00", "19 Apr 21:00", "20 Apr 01:00", "20 Apr 05:00", "20 Apr 09:00", "20 Apr 13:00"],
    prices: ["76399.20", "76174.80", "75950.40", "75719.20", "75494.80", "75243.98", "75039.20", "74814.80", "74590.40", "74359.20", "74134.80", "73910.40", "73686.00"],
    mark: 5, markClass: MARK, oscMax: "39.1287", oscMin: "-71.213", zeroAt: "absolute top-[44px] left-[2px]",
  },
];

/* ---------- toolbar ---------- */

const plus = <path d="M7 9.500H14M10.500 6V13" stroke="#18a828" strokeWidth="3" />;
const axes = <path d="M2.500 2V11.500H12M1 3.500L2.500 1.500L4 3.500M10.500 10L12.500 11.500L10.500 13" stroke="#666" fill="none" />;

const ICONS = {
  newChart: <><rect x="1" y="1.500" width="9.500" height="8" fill="#e4f4e8" stroke="#4a9a68" />{plus}</>,
  profiles: <><rect x="0.500" y="1" width="9" height="7.500" fill="#cfe6f6" stroke="#4c8cb8" /><rect x="3.500" y="4.500" width="9.500" height="8" fill="#eaf5fc" stroke="#4c8cb8" /><path d="M3.500 6H13" stroke="#4c8cb8" /></>,
  market: <><rect x="1" y="1" width="12" height="12" fill="#f8fcf8" stroke="#78a0b8" /><path d="M3 4L5 3L8 6L6 7Z" fill="#2ca44c" /><path d="M6 8L8 6.500L11 10L8.500 11Z" fill="#d86a30" /></>,
  target: <><circle cx="7" cy="7" r="4" fill="none" stroke="#777" /><path d="M7 0.500V5M7 9V13.500M0.500 7H5M9 7H13.500" stroke="#777" /></>,
  navigator: <><path d="M0.500 1.500H4.500L5.500 3H9.500V8.500H0.500Z" fill="#f6dc74" stroke="#b8902c" /><path d="M9 4.500L10.500 7.800L13.800 8.200L11.400 10.400L12 13.600L9 12L6 13.600L6.600 10.400L4.200 8.200L7.500 7.800Z" fill="#fbd33c" stroke="#b8902c" strokeWidth="0.700" /></>,
  terminal: <><rect x="1" y="1.500" width="12" height="11" fill="#f4faff" stroke="#3c78b0" /><path d="M2.700 2V12" stroke="#3c78b0" strokeWidth="2.500" /></>,
  tester: <><rect x="1" y="1" width="9" height="11" fill="#eef5fb" stroke="#6a9cc0" /><path d="M3 4H8M3 6H6" stroke="#6a9cc0" /><circle cx="8.500" cy="8" r="2.800" fill="#d8ecfa" stroke="#5a88ac" /><path d="M10.500 10L13.500 13.500" stroke="#b89040" strokeWidth="1.600" /></>,
  order: <><path d="M1.500 0.500H7.500L10.500 3.500V11.500H1.500Z" fill="#f4f4f4" stroke="#808080" />{plus}</>,
  book: <><path d="M1 8L6 2.500L13 8L8 12Z" fill="#f0bc3c" stroke="#a87418" /><path d="M1 8V9.500L7.500 13.500L13 9.500V8L8 12Z" fill="#c88c20" /></>,
  person: <><rect x="4" y="1" width="7" height="7" rx="2" fill="#7cc0ec" stroke="#3c7cb4" /><path d="M1 12.500Q1 8.500 7 8.500Q13 8.500 13 12.500Z" fill="#c4e2f6" stroke="#3c7cb4" /></>,
  signal: <><circle cx="7" cy="7" r="6" fill="none" stroke="#a0c4b0" /><circle cx="7" cy="7" r="3.600" fill="none" stroke="#68a884" /><circle cx="7" cy="7" r="1.700" fill="#2c9c4c" /><path d="M7 8V13.500" stroke="#2c9c4c" strokeWidth="1.500" /></>,
  auto: <><path d="M0.500 4L6 1L12.500 4V7H0.500Z" fill="#7cb4d8" stroke="#4880a8" strokeWidth="0.700" /><path d="M1.500 7L4.500 12.500H9L12 7Z" fill="#f0c848" /><circle cx="10" cy="10" r="3.800" fill="#dc2c1c" /><rect x="8.500" y="8.500" width="3" height="3" fill="#fff" /></>,
  bars: <>{axes}<path d="M6 4V10M5 8H6M6 5H7M9.500 3V9M8.500 7H9.500M9.500 4H10.500" stroke="#2c9c4c" /></>,
  candles: <>{axes}<path d="M8 1V11" stroke="#187828" /><rect x="6" y="3" width="4" height="6" fill="#28b83c" stroke="#187828" strokeWidth="0.800" /></>,
  curve: <>{axes}<path d="M3 9Q6 2 8 5T12 8" stroke="#777" fill="none" /></>,
  zoomIn: <><path d="M8.500 8.500L13 13" stroke="#d0a030" strokeWidth="2.500" /><circle cx="5.500" cy="5.500" r="4.500" fill="#d8eefc" stroke="#4484bc" /><path d="M3 5.500H8M5.500 3V8" stroke="#2868a8" /></>,
  zoomOut: <><path d="M8.500 8.500L13 13" stroke="#d0a030" strokeWidth="2.500" /><circle cx="5.500" cy="5.500" r="4.500" fill="#d8eefc" stroke="#4484bc" /><path d="M3 5.500H8" stroke="#2868a8" /></>,
  tile: <><rect x="0.500" y="1" width="6.200" height="5.700" fill="#3c9c3c" /><rect x="7.300" y="1" width="6.200" height="5.700" fill="#3c70b8" /><rect x="0.500" y="7.300" width="6.200" height="5.700" fill="#3c70b8" /><rect x="7.300" y="7.300" width="6.200" height="5.700" fill="#3c9c3c" /><path d="M1.500 4.600H5.800M8.200 4.600H12.500M1.500 10.900H5.800M8.200 10.900H12.500" stroke="#eef6ee" strokeWidth="1.800" /></>,
  scroll: <>{axes}<path d="M6 4V10L11 7Z" fill="#28a83c" /></>,
  shift: <>{axes}<path d="M7 2V10" stroke="#777" /><path d="M7.500 6L10.500 3.500V8.500ZM10 6H13" fill="#777" stroke="#777" strokeWidth="0.600" /></>,
  indicators: <><path d="M1.500 0.500H7.500L10.500 3.500V11.500H1.500Z" fill="#f4f8f4" stroke="#80a080" /><path d="M4 9Q5 3 7 4" stroke="#888" fill="none" />{plus}</>,
  clock: <><circle cx="7" cy="7" r="6.500" fill="#2c70b8" /><circle cx="7" cy="7" r="4.300" fill="#e8f4fc" /><path d="M7 4.500V7H9" stroke="#234" fill="none" /></>,
  template: <><rect x="0.500" y="1.500" width="13" height="11" fill="#f4fafe" stroke="#4c88b4" /><path d="M0.500 3H13.500" stroke="#4c88b4" strokeWidth="1.500" /><path d="M2 8L5 6L7 8L12 5M2 11L5 9L8 11L12 9" stroke="#66a" fill="none" strokeWidth="0.800" /></>,
  arrow: <path d="M4 1V11L6.500 9L8 13L10 12L8.300 8.300H11.500Z" fill="#333" />,
  cross: <path d="M7 0.500V5.500M7 8.500V13.500M0.500 7H5.500M8.500 7H13.500" stroke="#666" />,
  vline: <path d="M7 2V12" stroke="#555" />,
  hline: <path d="M2 7H12" stroke="#555" />,
  trend: <path d="M2.500 11.500L11.500 2.500" stroke="#555" />,
  channel: <><path d="M1 9L9 1M1 13L11 3M3 13L12 5M3 5L8 9M6 2L11 7" stroke="#555" fill="none" strokeWidth="0.900" /><path d="M9.500 9V13.500M9.500 9.500H12.500M9.500 11.300H12M9.500 13.200H12.500" stroke="#333" fill="none" /></>,
  fibo: <><path d="M1 2.500H12M1 5.500H12M1 8.500H12M1 11.500H8" stroke="#777" strokeDasharray="1.500 0.700" /><path d="M10 9V13.500M10 9.500H13M10 11.500H12" stroke="#333" /></>,
  arrows: <path d="M1 4L4 1.500L7 4L4 6.500ZM4 5L8 8L10 6L13 9.500L10 12.500L7.500 10H9L4 7Z" fill="#444" />,
};

const Icon = ({ name }) => (
  <svg viewBox="0 0 14 14" className="h-[12px] w-[12px] shrink-0" aria-hidden="true">{ICONS[name]}</svg>
);

const Tool = ({ icon, label, pressed, children }) => (
  <button
    aria-label={label}
    className={
      pressed
        ? "flex h-[16px] w-[19px] shrink-0 items-center justify-center border-t border-l border-[#a0a0a0] bg-[#f8f8f8]"
        : "flex h-[16px] w-[19px] shrink-0 items-center justify-center"
    }
  >
    {icon ? <Icon name={icon} /> : children}
  </button>
);

const DropTool = ({ icon, label }) => (
  <button aria-label={label} className="flex h-[16px] w-[25px] shrink-0 items-center gap-[2px] pl-[4px]">
    <Icon name={icon} />
    <svg viewBox="0 0 5 3" className="h-[3px] w-[5px]"><path d="M0 0H5L2.500 3Z" fill="#111" /></svg>
  </button>
);

const Sep = () => <span className="mx-px h-[14px] w-[2px] shrink-0 border-r border-[#b4b4b4]" />;
const Grip = () => <span className="mx-px h-[14px] w-[3px] shrink-0 border-x border-[#b4b4b4]" />;

export default function App() {
  return (
    <div className="flex min-h-screen flex-col overflow-hidden bg-[#101112] pt-[17px] font-['Noto_Sans','Open_Sans',sans-serif]">
      <main className="flex-1 rounded-t-[6px] bg-[#f0f0f0]">
        <header className="flex h-[20px] items-center rounded-t-[6px] bg-[#f0f4f9] pr-[11px] pl-[6px]">
          <span className="flex h-[10px] w-[10px] items-center justify-center bg-[#ffde02]">
            <span className="h-px w-[6px] bg-[#8a7a10]" />
          </span>
          <h1 className="ml-[5px] flex-1 text-[8px] text-[#1a1a1a]">71753526: Exness-Trial10 - Demo Account - Exness Technologies Ltd - XAUUSDm,M15</h1>
          <div className="flex gap-[21px] text-[#333]">
            <button aria-label="Minimize"><svg viewBox="0 0 10 10" className="h-[10px] w-[10px]"><path d="M2 5.500H9" stroke="currentColor" /></svg></button>
            <button aria-label="Maximize"><svg viewBox="0 0 10 10" className="h-[10px] w-[10px]"><rect x="1.500" y="1.500" width="6.500" height="6.500" rx="1" fill="none" stroke="currentColor" /></svg></button>
            <button aria-label="Close"><svg viewBox="0 0 10 10" className="h-[10px] w-[10px]"><path d="M1.500 1.500L8 8M8 1.500L1.500 8" stroke="currentColor" /></svg></button>
          </div>
        </header>
        <nav className="flex h-[14px] items-center gap-[11px] pl-[5px] text-[8px] text-[#222]">
          {["File", "View", "Insert", "Charts", "Tools", "Window", "Help"].map((m) => (
            <button key={m}>{m}</button>
          ))}
        </nav>
        <div className="flex h-[19px] items-center border-t border-[#c4c4c4]">
          <div className="flex h-full items-center border-r border-b border-[#c4c4c4] pl-[4px] text-[8px] text-[#222]">
            <DropTool icon="newChart" label="New chart" />
            <DropTool icon="profiles" label="Profiles" />
            <Sep />
            <Tool icon="market" label="Market watch" />
            <Tool icon="target" label="Data window" />
            <Tool icon="navigator" label="Navigator" />
            <Tool icon="terminal" label="Terminal" />
            <Tool icon="tester" label="Strategy tester" />
            <Sep />
            <button className="flex w-[59px] shrink-0 items-center gap-[2px] pl-[2px] whitespace-nowrap"><Icon name="order" />New Order</button>
            <Tool icon="book" label="MetaEditor" />
            <Tool icon="person" label="Community" />
            <Tool icon="signal" label="Signals" />
            <button className="flex w-[65px] shrink-0 items-center gap-[2px] pl-[3px] whitespace-nowrap"><Icon name="auto" />AutoTrading</button>
            <Grip />
            <Tool icon="bars" label="Bar chart" />
            <Tool icon="candles" label="Candlesticks" pressed />
            <Tool icon="curve" label="Line chart" />
            <Sep />
            <Tool icon="zoomIn" label="Zoom in" />
            <Tool icon="zoomOut" label="Zoom out" />
            <Tool icon="tile" label="Tile windows" />
            <Sep />
            <Tool icon="scroll" label="Auto scroll" />
            <Tool icon="shift" label="Chart shift" pressed />
            <Sep />
            <DropTool icon="indicators" label="Indicators" />
            <DropTool icon="clock" label="Periods" />
            <DropTool icon="template" label="Templates" />
          </div>
          <div className="ml-auto flex items-center gap-[9px] pr-[4px]">
            <button aria-label="Search">
              <svg viewBox="0 0 12 12" className="h-[10px] w-[10px]"><circle cx="7" cy="4.500" r="3" fill="#e4ecfa" stroke="#3c5cb0" strokeWidth="1.300" /><path d="M5 6.500L1.500 10.500" stroke="#3c5cb0" strokeWidth="2" /></svg>
            </button>
            <button aria-label="Chat">
              <svg viewBox="0 0 16 12" className="h-[12px] w-[15px]"><ellipse cx="10.500" cy="4.500" rx="4.800" ry="3.500" fill="#ececec" stroke="#999" /><path d="M12 7.500L14 10L10 8" fill="#999" /><ellipse cx="4.800" cy="7.500" rx="4" ry="2.800" fill="#f6f6f6" stroke="#999" /></svg>
            </button>
          </div>
        </div>
        <div className="flex h-[18px] items-center">
          <div className="flex h-full items-center border-r border-[#c4c4c4] pl-[4px] text-[7px] text-[#444]">
            <Tool icon="arrow" label="Cursor" pressed />
            <Tool icon="cross" label="Crosshair" />
            <Sep />
            <Tool icon="vline" label="Vertical line" />
            <Tool icon="hline" label="Horizontal line" />
            <Tool icon="trend" label="Trendline" />
            <Tool icon="channel" label="Channel" />
            <Tool icon="fibo" label="Fibonacci" />
            <Tool label="Text"><span className="text-[9px] font-semibold">A</span></Tool>
            <Tool label="Text label"><span className="h-[9px] w-[9px] border border-dotted border-[#888] text-[8px] leading-[8px] font-semibold">T</span></Tool>
            <DropTool icon="arrows" label="Arrows" />
            <Grip />
            {["M1", "M5", "M15", "M30", "H1", "H4", "D1", "W1", "MN"].map((t) => (
              <Tool key={t} label={t} pressed={t === "M15"}>{t}</Tool>
            ))}
          </div>
        </div>
        <div className="flex gap-px border-t border-[#5a6066] bg-[#8c8f94] px-[3px] pt-px pb-[2px]">
          {WINDOWS.map((w) => (
            <SubWindow key={w.title} w={w} />
          ))}
        </div>
        <div className="flex h-[4px] bg-[#e8e8e8] pl-[4px]">
          <span className="w-[70px] border-x border-[#444] bg-white" />
          <span className="w-[65px] border-t border-r border-[#555]" />
          <span className="w-[70px] border-t border-r border-[#555]" />
          <span className="flex-1 border-t border-[#555]" />
        </div>
      </main>
      <footer className="h-[42px] overflow-hidden bg-[#0a4cc8]">
        <p className="-ml-[10px] font-['Lato',sans-serif] text-[29px] leading-[42px] font-bold whitespace-nowrap text-white">
          Trading is risky.Trade at your own discreation!!!!!!!!!!!
        </p>
      </footer>
    </div>
  );
}
